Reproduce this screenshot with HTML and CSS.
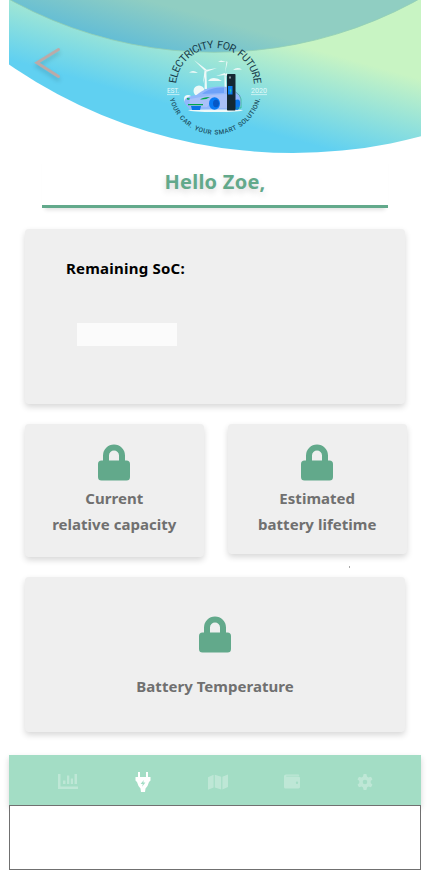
FILE: index.html
```html
<!DOCTYPE html>
<html lang="en">
<head>
<meta charset="utf-8">
<title>Electricity for Future</title>
<link rel="stylesheet" href="styles.css">
</head>
<body>
<svg class="defs" width="0" height="0" aria-hidden="true">
  <symbol id="lock" viewBox="0 0 32 36">
    <path fill-rule="evenodd" d="M5 16V11a11 11 0 0 1 22 0v5h1.500a3.500 3.500 0 0 1 3.500 3.500v13a3.500 3.500 0 0 1-3.500 3.500h-25A3.500 3.500 0 0 1 0 32.500v-13A3.500 3.500 0 0 1 3.500 16zM11 16h10v-5a5 5 0 0 0-10 0z"/>
  </symbol>
</svg>
<div class="screen">
  <header class="hero">
    <svg class="hero-art" width="412" height="155" viewBox="9 0 412 155">
      <defs>
        <linearGradient id="outer" gradientUnits="userSpaceOnUse" x1="199" y1="113" x2="224" y2="24">
          <stop offset="0" stop-color="#60d0f1"/><stop offset="1" stop-color="#c8f4c3"/>
        </linearGradient>
        <linearGradient id="inner" gradientUnits="userSpaceOnUse" x1="140" y1="52" x2="154" y2="2">
          <stop offset="0" stop-color="#60bcd7"/><stop offset="1" stop-color="#90cec2"/>
        </linearGradient>
        <path id="arcTop" d="M176 87A39 39 0 0 1 254 87"/>
        <path id="arcBottom" d="M168.500 88A46.500 46.500 0 0 0 261.500 88"/>
      </defs>
      <circle cx="293" cy="-347" r="500" fill="url(#outer)"/>
      <circle cx="214" cy="-370" r="422.300" fill="url(#inner)" stroke="#92cfb4" stroke-width=".8"/>
      <path class="back" d="M58.500 49.500L37 62.700L58.500 76.500"/>
      <g class="logo-top"><text><textPath href="#arcTop" startOffset="3.500" textLength="116">ELECTRICITY FOR FUTURE</textPath></text></g>
      <g class="logo-bottom"><text><textPath href="#arcBottom" startOffset="11" textLength="124">YOUR CAR. YOUR SMART SOLUTION.</textPath></text></g>
      <g class="logo-side">
        <text x="167" y="93.200" textLength="12">EST.</text>
        <text x="251" y="93.200" textLength="16" lengthAdjust="spacingAndGlyphs">2020</text>
        <path d="M167 94.600h12.500M251 94.600h16"/>
      </g>
      <g fill="#eef9f8">
        <path d="M188 110q27-2 55 0q-2 2-27 2t-28-2z"/>
        <circle cx="199" cy="91" r="5.500"/><circle cx="188" cy="99" r="4"/>
        <path d="M189 72.500q2-1.500 4-1.500t5 2zM208 81q2-3 6-3t8 3zM218 62l3-1.500 5 1.500zM233 70q4-3.500 9-.5z"/>
        <path d="M205 71h1.300l.7 18h-2.500zM224.500 74h1l1 14h-2z"/>
        <path d="M205 71L194 60l12.500 9.500zM205.500 70l11.500-2-11 4zM204.500 70.500l-1.500 13 3.500-12zM225 73l1.500-12 1 1zM225 73l-9 3 9-1zM226 73l7 5-8-3z"/>
      </g>
      <path fill="#91b8fb" d="M184.500 103c-1-5 4-7 12-8 7-6 14-8.500 25-8.500 10 0 14 4 19 9l1 9-3 5h-49z"/>
      <path fill="#6fa2f8" d="M202 94c6-5 12-6.500 22-6.500v5.500z"/>
      <path fill="#a9c1f9" d="M190 99l22-4 15-1v14h-8q-4-12-12-1l-18-1z"/>
      <path fill="#0873e7" d="M191 106h10l-1 4h-8zM235 100q6-2 5 5t-5 4z"/>
      <ellipse cx="214.500" cy="103.500" rx="5.500" ry="6.200" fill="#087af4"/>
      <ellipse cx="216" cy="103.500" rx="3" ry="3.700" fill="#0657c5"/>
      <path d="M200 99.500q3-2.500 10-2.500-4 3-10 2.500zM187 98l3 .5-1 1.300-2-.2zM188 104h15v1.200h-15z" fill="#00a64c"/>
      <path d="M235.500 92q5 3 5.500 7v9h-5" fill="none" stroke="#23af68" stroke-width=".6"/>
      <rect x="227" y="74" width="8.500" height="36.500" rx=".7" fill="#142832"/>
      <path d="M229.500 76.500h1v2h-1z" fill="#e8f4f5"/>
      <path d="M228 86h4.500v8.500H228z" fill="#087cf0"/>
      <path d="M230.800 88l-1.200 3h1l-.5 3 1.500-3.500h-1z" fill="#38e47c"/>
    </svg>
  </header>
  <main>
    <h1>Hello Zoe,</h1>
    <div class="cards">
      <section class="card soc"><h2>Remaining SoC:</h2><div class="value"></div></section>
      <section class="card half">
        <svg class="lock"><use href="#lock"/></svg>
        <p>Current<br>relative capacity</p>
      </section>
      <section class="card half life">
        <svg class="lock"><use href="#lock"/></svg>
        <p>Estimated<br>battery lifetime</p>
        <i class="speck"></i>
      </section>
      <section class="card temp">
        <svg class="lock"><use href="#lock"/></svg>
        <p>Battery Temperature</p>
      </section>
    </div>
  </main>
  <nav>
    <svg viewBox="0 0 20 16" width="20" height="16"><path d="M0 0h2.500v12.500H20V15H0zM5 6.500h2.500V10H5zM9 1.500h2.300V10H9zM12.800 4.500H15V10h-2.200zM16.500 0H19v10h-2.500z"/></svg>
    <svg class="active" viewBox="0 0 16 20" width="16" height="20"><path fill-rule="evenodd" d="M3 0h2v5h6V0h2v5h2.500v3.500L14 10l-1.500 4-2 2.500-.5 3.500H6l-.5-3.500-2-2.500L2 10 .5 8.500V5H3zM8.800 8L5.600 12h2.200l-.7 2.800 3.300-4.200H8.300z"/></svg>
    <svg viewBox="0 0 20 16" width="20" height="16"><path d="M0 3.200L5.600.8v12.600L0 15.700zM6.800.8l6.400 2v12.700l-6.400-2zM14.400 2.800L20 .5v12.600l-5.600 2.400z"/></svg>
    <svg viewBox="0 0 16 15" width="16" height="15"><path fill-rule="evenodd" d="M2 .5h12.500q.8.300.8 1.300H2.200v.8H14.500q1.500 0 1.500 1.500v9q0 1.400-1.500 1.400H1.500Q0 14.500 0 13V2.300Q0 .5 2 .5zM13 7.500a1.200 1.200 0 1 0 0 2.400 1.200 1.200 0 0 0 0-2.400z"/></svg>
    <svg viewBox="0 0 16 16" width="16" height="16"><path fill-rule="evenodd" d="M6.600 0h2.800l.6 2.600 1.300.8L14 2.700l1.500 2.600L13.700 7v2l1.800 1.700-1.500 2.600-2.700-.7-1.300.8-.6 2.600H6.600L6 13.400l-1.300-.8-2.700.7-1.500-2.600L2.300 9V7L.5 5.300 2 2.700l2.700.7L6 2.600zM8 5.700a2.300 2.300 0 1 0 0 4.600 2.300 2.300 0 0 0 0-4.600z"/></svg>
  </nav>
  <footer></footer>
</div>
</body>
</html>
```
FILE: styles.css
```css
* { box-sizing: border-box; }
body {
  margin: 0;
  background: #fff;
  font-family: "Noto Sans", sans-serif;
}
.defs { position: absolute; }
.screen {
  width: 412px;
  height: 870px;
  margin-left: 9px;
  display: flex;
  flex-direction: column;
}
.hero { height: 155px; }
.hero-art { display: block; }
.back {
  fill: none;
  stroke: #bbaaa8;
  stroke-width: 3;
  stroke-linecap: round;
  filter: drop-shadow(0 3px 2px rgba(0, 0, 0, .16));
}
.logo-top { font: 400 10.500px Roboto, sans-serif; word-spacing: 1.500px; fill: #173c49; }
.logo-bottom { font: 500 6.500px Roboto, sans-serif; word-spacing: 1px; fill: #1e5264; }
.logo-side { font: 400 6.500px Roboto, sans-serif; fill: #e3f9fa; }
.logo-side path { stroke: #e3f9fa; stroke-width: .7; }
main { height: 600px; padding: 0 13px 0 16px; }
h1 {
  height: 53px;
  margin: 0 20px 21px 17px;
  padding-top: 11px;
  border-bottom: 3px solid #62a98b;
  text-align: center;
  font-size: 20px;
  letter-spacing: .25px;
  line-height: 32px;
  color: #62a98b;
  text-shadow: 0 3px 6px rgba(0, 0, 0, .16);
  box-shadow: 0 5px 4px -3px rgba(0, 0, 0, .12);
}
.cards {
  display: grid;
  grid-template-columns: 178.500px 179.500px;
  grid-template-rows: 175px 133px 155px;
  column-gap: 24px;
  row-gap: 20px;
}
.card {
  border-radius: 4px;
  background: #efefef;
  box-shadow: 0 3px 6px rgba(0, 0, 0, .16);
  text-align: center;
  color: #707070;
}
.soc, .temp { grid-column: 1 / 3; width: 380px; }
.soc { padding: 27px 41px; text-align: left; }
h2 { margin: 0; font-size: 15px; letter-spacing: .22px; line-height: 24px; color: #000; }
.value { width: 100px; height: 23px; margin: 43px 0 0 11px; background: #fbfbfb; }
.half { padding-top: 20px; }
.life { height: 130px; position: relative; }
.lock { display: block; width: 32px; height: 37px; margin: 0 auto; fill: #62a98b; }
.card p { margin: 4px 0 0; font-size: 15px; font-weight: 700; line-height: 26px; letter-spacing: .03px; }
.temp { padding-top: 39px; }
.temp p { margin-top: 20px; }
.speck { position: absolute; left: 121px; top: 142px; width: 1px; height: 2px; background: #aaa; }
nav {
  height: 50px;
  padding: 3px 48px 0 49px;
  display: flex;
  align-items: center;
  justify-content: space-between;
  background: #a3ddc5;
  fill: rgba(255, 255, 255, .3);
  box-shadow: 0 3px 6px rgba(0, 0, 0, .16);
}
.active { fill: #fff; }
footer { height: 65px; border: 1px solid #707070; background: #fff; position: relative; }
```
